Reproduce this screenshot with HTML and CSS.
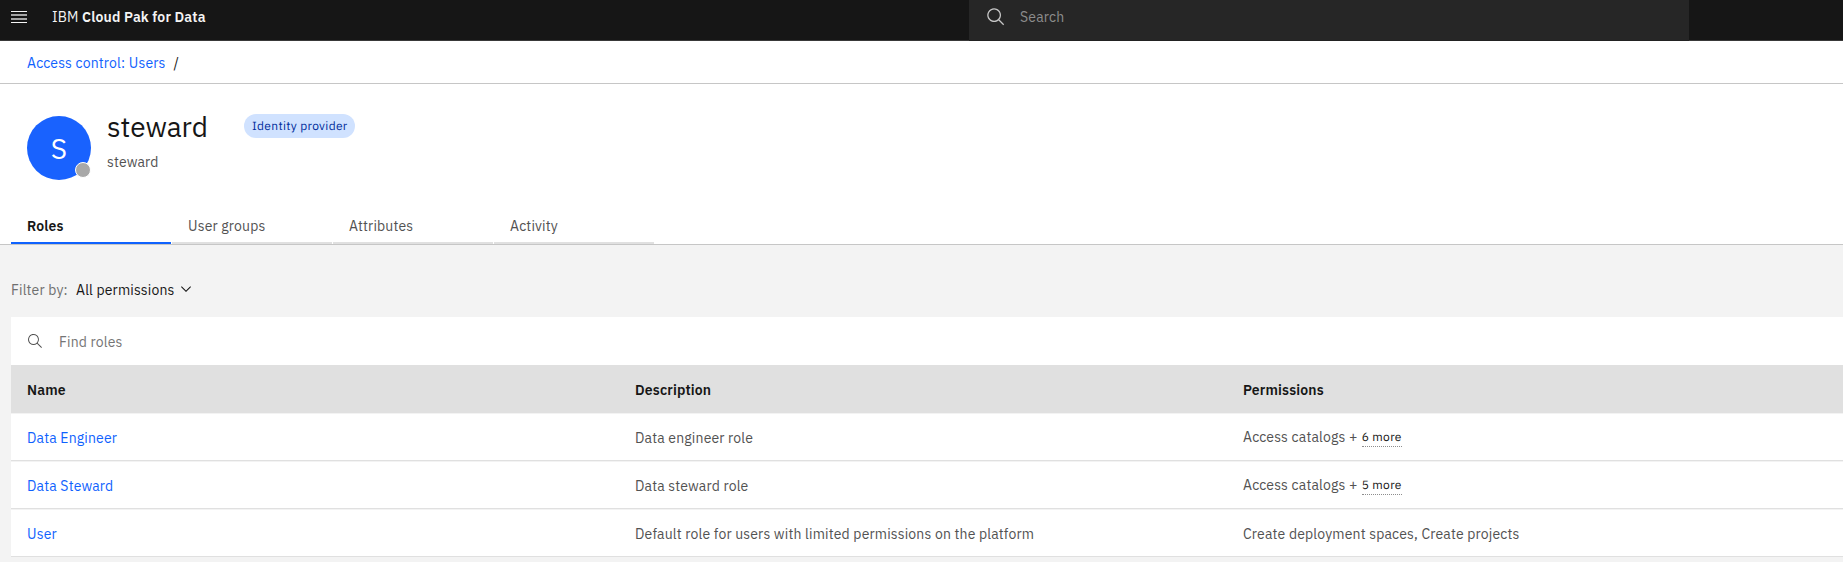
FILE: index.html
```html
<!DOCTYPE html>
<html lang="en">
<head>
<meta charset="utf-8">
<title>IBM Cloud Pak for Data</title>
<link rel="stylesheet" href="styles.css">
</head>
<body>
<header class="topbar">
  <svg class="menu-icon" width="16" height="12" viewBox="0 0 16 12" shape-rendering="crispEdges"><path fill="#f4f4f4" d="M0 0h16v1H0zM0 11h16v1H0z"/><path fill="#a4a4a4" d="M0 3h16v2H0zM0 7h16v2H0z"/></svg>
  <div class="brand"><span class="brand-ibm">IBM</span> <b>Cloud Pak for Data</b></div>
  <div class="global-search">
    <svg width="20" height="20" viewBox="0 0 32 32" fill="#c6c6c6"><path d="M29 27.586l-7.552-7.552a11.018 11.018 0 1 0-1.414 1.414L27.586 29zM4 13a9 9 0 1 1 9 9 9.01 9.01 0 0 1-9-9z"/></svg>
    <span class="search-label">Search</span>
  </div>
</header>
<nav class="breadcrumb"><a class="crumb">Access control: Users</a><span>/</span></nav>
<section class="profile">
  <div class="identity">
    <div class="avatar">S<span class="status"></span></div>
    <div class="names">
      <div class="title-row"><h1 class="title">steward</h1><span class="tag">Identity provider</span></div>
      <div class="subtitle">steward</div>
    </div>
  </div>
  <div class="tabs">
    <div class="tab active">Roles</div>
    <div class="tab">User groups</div>
    <div class="tab">Attributes</div>
    <div class="tab">Activity</div>
  </div>
</section>
<main class="content">
  <div class="filter">
    <span class="filter-label">Filter by:</span>
    <span class="filter-value">All permissions</span>
    <svg width="16" height="16" viewBox="0 0 16 16" fill="#161616"><path d="M8 11L3 6l.7-.7L8 9.600l4.300-4.300.7.7z"/></svg>
  </div>
  <div class="find">
    <svg width="16" height="16" viewBox="0 0 16 16" fill="#525252"><path d="M15 14.300L10.700 10c1.900-2.300 1.600-5.800-.7-7.700S4.200.7 2.300 3 .7 8.800 3 10.700c2 1.700 5 1.700 7 0l4.300 4.300.7-.7zM2 6.500C2 4 4 2 6.500 2S11 4 11 6.500 9 11 6.500 11 2 9 2 6.500z"/></svg>
    <span class="find-label">Find roles</span>
  </div>
  <div class="row head"><div>Name</div><div>Description</div><div>Permissions</div></div>
  <div class="row"><div class="link">Data Engineer</div><div>Data engineer role</div><div class="perm"><span>Access catalogs +</span><span class="more">6 more</span></div></div>
  <div class="row"><div class="link">Data Steward</div><div>Data steward role</div><div class="perm"><span>Access catalogs +</span><span class="more">5 more</span></div></div>
  <div class="row"><div class="link">User</div><div>Default role for users with limited permissions on the platform</div><div>Create deployment spaces, Create projects</div></div>
</main>
</body>
</html>
```
FILE: styles.css
```css
* { box-sizing: border-box; }
body {
  margin: 0;
  height: 562px;
  overflow: hidden;
  background: #f3f3f3;
  color: #161616;
  font: 14px/18px "IBM Plex Sans", Roboto, sans-serif;
  letter-spacing: 0.16px;
}
svg { display: block; flex: none; }
span, div { white-space: nowrap; }

.topbar {
  display: flex;
  height: 41px;
  background: #161616;
  border-bottom: 1px solid #393939;
  color: #f4f4f4;
}
.menu-icon { margin: 11px 0 0 11px; }
.brand { width: 917px; margin-left: 25px; padding-top: 8px; }
.brand b { font-weight: 600; }
.global-search {
  display: flex;
  gap: 14px;
  width: 720px;
  height: 41px;
  padding: 7px 0 0 17px;
  background: #262626;
  border-bottom: 1px solid #222;
  color: #8d8d8d;
}
.search-label { padding-top: 1px; }

.breadcrumb {
  display: flex;
  gap: 8px;
  height: 43px;
  padding: 13px 27px 0;
  background: #fff;
  border-bottom: 1px solid #c6c6c6;
}
.crumb, .link { color: #0f62fe; }

.profile {
  display: flex;
  flex-direction: column;
  justify-content: space-between;
  height: 161px;
  background: #fff;
  border-bottom: 1px solid #c6c6c6;
}
.identity { display: flex; gap: 16px; padding: 32px 27px 0; }
.avatar {
  position: relative;
  width: 64px;
  height: 64px;
  border-radius: 50%;
  background: #1962fe;
  color: #fff;
  font-size: 28px;
  line-height: 65px;
  letter-spacing: 0;
  text-align: center;
}
.status {
  position: absolute;
  right: 0;
  bottom: 2px;
  width: 16px;
  height: 16px;
  border: 1px solid #fff;
  border-radius: 50%;
  background: #a8a8a8;
}
.title-row { display: flex; gap: 36px; height: 36px; }
.title {
  width: 101px;
  margin: -7px 0 0;
  font-size: 28px;
  font-weight: 400;
  line-height: 36px;
  letter-spacing: 0;
}
.tag {
  height: 24px;
  margin-top: -2px;
  padding: 0 8px;
  width: 111px;
  border-radius: 12px;
  background: #d0e2ff;
  color: #002d9c;
  font-size: 12px;
  line-height: 26px;
  letter-spacing: 0.32px;
}
.tag, .more { text-rendering: geometricPrecision; }
.subtitle { color: #525252; margin-top: 1px; }
.tabs { display: flex; gap: 1px; padding-left: 11px; }
.tab {
  width: 160px;
  height: 34px;
  padding: 7px 16px 0;
  border-bottom: 2px solid #e0e0e0;
  color: #525252;
}
.active { border-color: #0f62fe; color: #161616; font-weight: 600; }

.content { padding-left: 11px; }
.filter { display: flex; height: 72px; padding-top: 36px; }
.filter-label { width: 65px; color: #6f6f6f; }
.filter svg { margin: 0 0 0 3px; }
.find {
  display: flex;
  gap: 16px;
  height: 48px;
  padding: 16px 16px 0;
  background: #fff;
  color: #757575;
}
.row {
  display: grid;
  grid-template-columns: 608px 608px 1fr;
  height: 48px;
  padding: 15px 0 0 16px;
  border-top: 1px solid #f3f3f3;
  border-bottom: 1px solid #e0e0e0;
  background: #fff;
  color: #525252;
}
.head { background: #e0e0e0; border-top-color: #e0e0e0; color: #161616; font-weight: 600; }
.perm { display: flex; gap: 4px; margin-top: -1px; }
.more {
  height: 19px;
  border-bottom: 1px dotted #8d8d8d;
  color: #161616;
  font-size: 12px;
  line-height: 20px;
  letter-spacing: 0.32px;
}
.row .link { color: #0f62fe; }
```
